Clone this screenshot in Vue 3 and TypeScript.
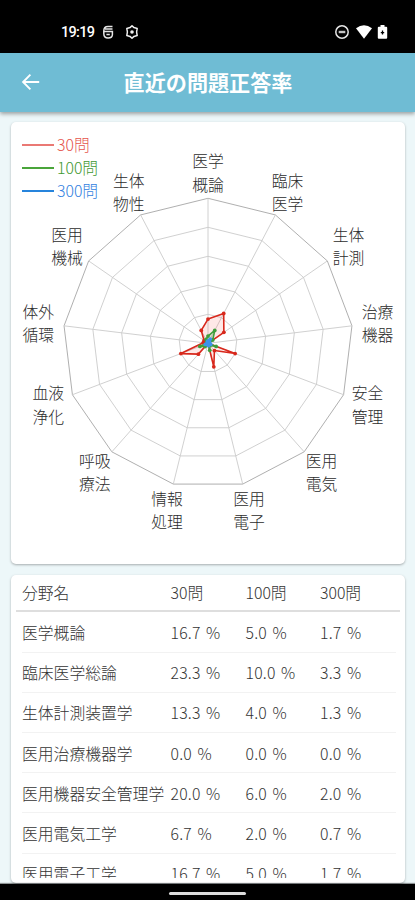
<script setup lang="ts">
interface Row {
  name: string
  values: [string, string, string]
}
interface AxisLabel {
  x: number
  y: number
  lines: [string, string]
}
interface Series {
  name: string
  color: string
  fill: string
  values: number[]
}

const cx = 197
const cy = 221.3
const radius = 145
const axisCount = 13

const axisLabels: AxisLabel[] = [
  { x: 197, y: 39.5, lines: ['医学', '概論'] },
  { x: 276.5, y: 59, lines: ['臨床', '医学'] },
  { x: 337.5, y: 113, lines: ['生体', '計測'] },
  { x: 366.5, y: 190, lines: ['治療', '機器'] },
  { x: 356.5, y: 271.5, lines: ['安全', '管理'] },
  { x: 310.5, y: 339, lines: ['医用', '電気'] },
  { x: 238, y: 377, lines: ['医用', '電子'] },
  { x: 156, y: 377, lines: ['情報', '処理'] },
  { x: 83.7, y: 339, lines: ['呼吸', '療法'] },
  { x: 37.3, y: 271.5, lines: ['血液', '浄化'] },
  { x: 27.3, y: 190, lines: ['体外', '循環'] },
  { x: 56, y: 113, lines: ['医用', '機械'] },
  { x: 117.7, y: 59, lines: ['生体', '物性'] },
]

const series: Series[] = [
  { name: '30問', color: '#d8281c', fill: 'rgba(244, 67, 54, 0.12)', values: [16.7, 23.3, 13.3, 0, 20, 6.7, 16.7, 0, 10, 20, 3.3, 3.3, 10] },
  { name: '100問', color: '#3f9e3c', fill: 'rgba(76, 175, 80, 0.2)', values: [5, 10, 4, 0, 6, 2, 5, 0, 3, 6, 1, 1, 3] },
  { name: '300問', color: '#3f93ea', fill: 'rgba(33, 150, 243, 0.5)', values: [1.7, 3.3, 1.3, 0, 2, 0.7, 1.7, 0, 1, 2, 0.3, 0.3, 1] },
]

const rows: Row[] = [
  { name: '医学概論', values: ['16.7 %', '5.0 %', '1.7 %'] },
  { name: '臨床医学総論', values: ['23.3 %', '10.0 %', '3.3 %'] },
  { name: '生体計測装置学', values: ['13.3 %', '4.0 %', '1.3 %'] },
  { name: '医用治療機器学', values: ['0.0 %', '0.0 %', '0.0 %'] },
  { name: '医用機器安全管理学', values: ['20.0 %', '6.0 %', '2.0 %'] },
  { name: '医用電気工学', values: ['6.7 %', '2.0 %', '0.7 %'] },
  { name: '医用電子工学', values: ['16.7 %', '5.0 %', '1.7 %'] },
]

function point(index: number, percent: number): [number, number] {
  const angle = (index * 2 * Math.PI) / axisCount
  const r = (radius * percent) / 100
  return [cx + r * Math.sin(angle), cy - r * Math.cos(angle)]
}
function polygon(values: number[]): string {
  return values.map((v, i) => point(i, v).map((n) => n.toFixed(2)).join(',')).join(' ')
}
const rings = [20, 40, 60, 80, 100].map((p) => polygon(Array<number>(axisCount).fill(p)))
const spokes = axisLabels.map((_, i) => point(i, 100))
</script>

<template>
  <div class="screen">
    <div class="status">
      <span class="clock">19:19</span>
      <svg class="s-icon g1" width="14" height="16" viewBox="0 0 14 16">
        <path d="M11.5 2.6H7Q2.8 2.6 2.8 7V9.4Q2.8 13.9 7.1 13.9T11.4 10.4V7.6H3M4 5.1H11.5M5.4 10.6H8.8" fill="none" stroke="#e4e4e4" stroke-width="1.5" />
      </svg>
      <svg class="s-icon g2" width="16" height="16" viewBox="0 0 16 16">
        <path d="M8 1.7L10 3.6L13.2 4.4L12.6 8L13.2 11.6L10 12.4L8 14.3L6 12.4L2.8 11.6L3.4 8L2.8 4.4L6 3.6Z" fill="none" stroke="#f0f0f0" stroke-width="1.5" stroke-linejoin="round" />
        <circle cx="8" cy="8" r="1.8" fill="#f0f0f0" />
      </svg>
      <div class="status-right">
        <svg width="16" height="16" viewBox="0 0 16 16">
          <circle cx="8" cy="8" r="6.2" fill="none" stroke="#e6e6e6" stroke-width="1.5" />
          <path d="M4.7 8H11.3" stroke="#c4c4c4" stroke-width="2.4" />
        </svg>
        <svg width="18" height="16" viewBox="0 0 18 16">
          <path d="M1 4.3Q9 -2 17 4.3L9 14.8Z" fill="#fff" />
        </svg>
        <svg width="11" height="16" viewBox="0 0 11 16">
          <path d="M3.5 1H7.5V2.7H9.2Q10.2 2.7 10.2 3.7V13.8Q10.2 14.8 9.2 14.8H1.8Q.8 14.8 .8 13.8V3.7Q.8 2.7 1.8 2.7H3.5Z" fill="#fff" />
          <path d="M5.5 6.6V10.6M3.8 8.6H7.2" stroke="#000" stroke-width="1.3" />
        </svg>
      </div>
    </div>

    <header class="appbar">
      <svg class="back" width="20" height="18" viewBox="0 0 20 18">
        <path d="M18.2 9H2.4M9.4 1.7L2.1 9L9.4 16.3" fill="none" stroke="#fff" stroke-width="1.9" />
      </svg>
      <h1>直近の問題正答率</h1>
    </header>

    <main class="content">
      <section class="card chart-card">
        <svg width="394" height="442" viewBox="0 0 394 442">
          <g fill="none" stroke="#cbcbcb" stroke-width="0.9">
            <polygon v-for="(r, i) in rings" :key="i" :points="r" :class="{ outer: i === 4 }" />
            <line v-for="(s, i) in spokes" :key="'s' + i" :x1="cx" :y1="cy" :x2="s[0]" :y2="s[1]" />
          </g>
          <g v-for="s in series" :key="s.name">
            <polygon :points="polygon(s.values)" :fill="s.fill" :stroke="s.color" stroke-width="1.6" stroke-linejoin="round" />
            <circle v-for="(v, i) in s.values" :key="i" :cx="point(i, v)[0]" :cy="point(i, v)[1]" r="1.9" :fill="s.color" />
          </g>
          <g class="axis-label" text-anchor="middle">
            <text v-for="(l, i) in axisLabels" :key="i">
              <tspan :x="l.x" :y="l.y + 5.8">{{ l.lines[0] }}</tspan>
              <tspan :x="l.x" :y="l.y + 29.1">{{ l.lines[1] }}</tspan>
            </text>
          </g>
        </svg>
        <ul class="legend">
          <li class="red"><i></i>30問</li>
          <li class="green"><i></i>100問</li>
          <li class="blue"><i></i>300問</li>
        </ul>
      </section>

      <section class="card table-card">
        <div class="row head">
          <span>分野名</span><span>30問</span><span>100問</span><span>300問</span>
        </div>
        <div class="rows">
          <div v-for="r in rows" :key="r.name" class="row">
            <span>{{ r.name }}</span>
            <span v-for="(v, i) in r.values" :key="i" class="num">{{ v }}</span>
          </div>
        </div>
      </section>
    </main>

    <div class="navbar"><div class="handle"></div></div>
  </div>
</template>

<style>
body {
  margin: 0;
  background: #000;
}
</style>

<style scoped>
.screen {
  width: 415px;
  height: 900px;
  display: flex;
  flex-direction: column;
  overflow: hidden;
  background: #edf7f9;
  color: #333;
  font-family: "Noto Sans CJK JP", sans-serif;
  font-size: 15.8px;
  font-weight: 300;
}
.status {
  height: 52.5px;
  flex: none;
  box-sizing: border-box;
  padding: 12px 27px 0 61px;
  display: flex;
  align-items: center;
  background: #000;
  color: #fff;
}
.clock {
  width: 40px;
  font-family: Roboto, sans-serif;
  font-size: 14.5px;
  font-weight: 500;
  letter-spacing: -0.7px;
}
.g2 {
  margin-left: 9px;
}
.status-right {
  margin-left: auto;
  display: flex;
  gap: 4.5px;
}
.appbar {
  height: 59.5px;
  flex: none;
  display: flex;
  align-items: center;
  justify-content: center;
  background: #6fbcd4;
  box-shadow: 0 2px 4px rgba(0, 0, 0, 0.35);
  z-index: 1;
  color: #fff;
}
.back {
  margin: 0 83px 0 -102px;
}
h1 {
  margin: 0;
  font-size: 21.1px;
  line-height: 30px;
  font-weight: 700;
}
.content {
  flex: 1;
  min-height: 0;
  box-sizing: border-box;
  padding: 10px 10px 0 11px;
  display: flex;
  flex-direction: column;
  gap: 11px;
}
.card {
  background: #fff;
  border-radius: 5px;
  box-shadow: 0 1px 2.5px rgba(0, 0, 0, 0.3);
}
.chart-card {
  position: relative;
  height: 442px;
  flex: none;
}
.chart-card svg {
  display: block;
}
.outer {
  stroke: #a6a6a6;
}
.axis-label {
  fill: #2c2c2c;
  font-size: 15.8px;
}
.legend {
  position: absolute;
  left: 11px;
  top: 11px;
  margin: 0;
  padding: 0;
  list-style: none;
}
.legend li {
  height: 23px;
  display: flex;
  align-items: center;
  gap: 3.5px;
}
.legend i {
  width: 31.5px;
  height: 2px;
  background: currentColor;
}
.red { color: #e5544d; }
.red i { background: #ea7974; }
.green { color: #3f9832; }
.green i { background: #4aa53a; }
.blue { color: #337fe0; }
.blue i { background: #2684dc; }
.table-card {
  height: 308px;
  flex: none;
  box-sizing: border-box;
  padding: 0 5px;
}
.row {
  display: grid;
  grid-template-columns: 148.5px 75px 74.5px 1fr;
  align-items: center;
  height: 39.2px;
  margin: 0 4px 0 6px;
  border-bottom: 1px solid #f2f2f2;
  white-space: nowrap;
}
.num {
  letter-spacing: 0.2px;
  word-spacing: 1.8px;
}
.head {
  height: 34.5px;
  margin: 0;
  padding-left: 6px;
  border-bottom: 2px solid #dedede;
}
.rows {
  height: 266.5px;
  box-sizing: border-box;
  padding-top: 1px;
  overflow: hidden;
}
.rows .row > span {
  padding-top: 1px;
}
.navbar {
  height: 16.5px;
  flex: none;
  box-sizing: border-box;
  padding-top: 8px;
  background: #000;
  box-shadow: 0 -1px 1px rgba(0, 0, 0, 0.4);
  z-index: 1;
}
.handle {
  width: 77px;
  height: 3px;
  margin: 0 auto;
  border-radius: 2px;
  background: #ddd;
}
</style>
